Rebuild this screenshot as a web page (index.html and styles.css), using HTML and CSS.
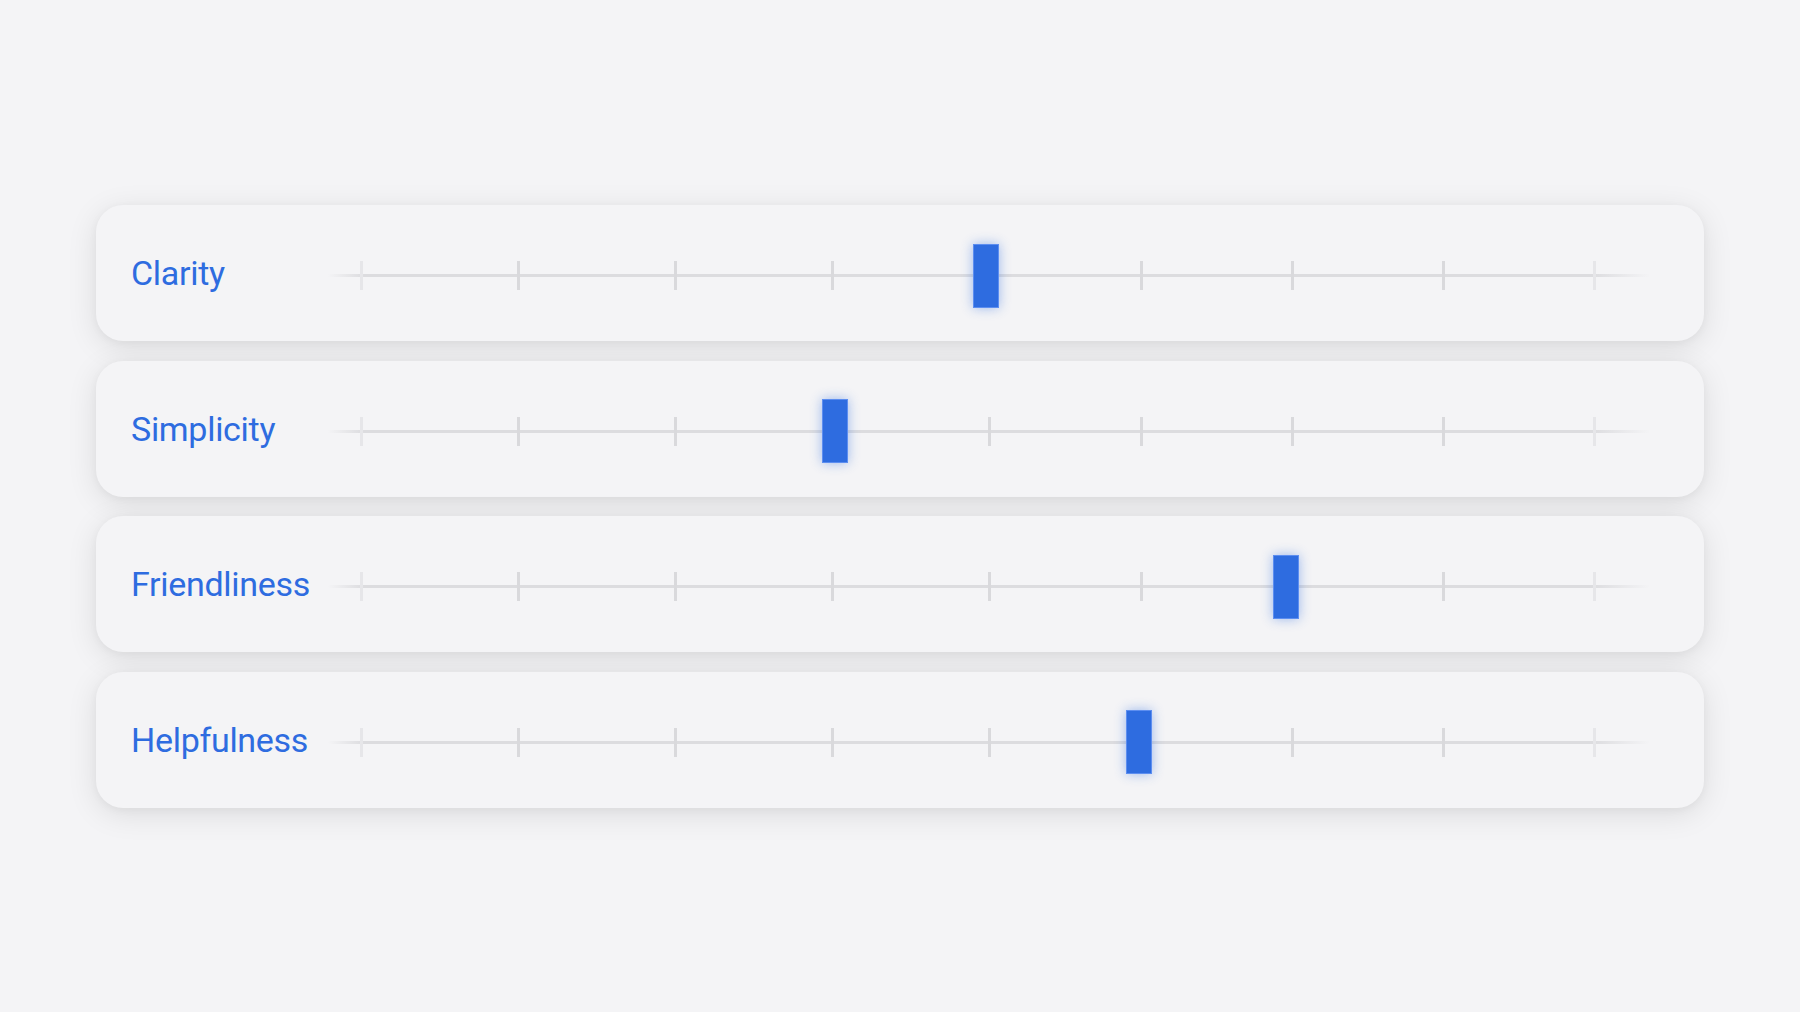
FILE: index.html
```html
<!DOCTYPE html>
<html>
<head>
<meta charset="utf-8">
<link rel="stylesheet" href="styles.css">
</head>
<body>
<main class="list">
  <section class="card">
    <div class="label">Clarity</div>
    <div class="track">
      <div class="line"></div>
      <div class="ticks"><i class="tick"></i><i class="tick"></i><i class="tick"></i><i class="tick"></i><i class="tick"></i><i class="tick"></i><i class="tick"></i><i class="tick"></i><i class="tick"></i></div>
      <div class="thumb" style="left:645px"></div>
    </div>
  </section>
  <section class="card">
    <div class="label">Simplicity</div>
    <div class="track">
      <div class="line"></div>
      <div class="ticks"><i class="tick"></i><i class="tick"></i><i class="tick"></i><i class="tick"></i><i class="tick"></i><i class="tick"></i><i class="tick"></i><i class="tick"></i><i class="tick"></i></div>
      <div class="thumb" style="left:494px"></div>
    </div>
  </section>
  <section class="card">
    <div class="label">Friendliness</div>
    <div class="track">
      <div class="line"></div>
      <div class="ticks"><i class="tick"></i><i class="tick"></i><i class="tick"></i><i class="tick"></i><i class="tick"></i><i class="tick"></i><i class="tick"></i><i class="tick"></i><i class="tick"></i></div>
      <div class="thumb" style="left:945px"></div>
    </div>
  </section>
  <section class="card">
    <div class="label">Helpfulness</div>
    <div class="track">
      <div class="line"></div>
      <div class="ticks"><i class="tick"></i><i class="tick"></i><i class="tick"></i><i class="tick"></i><i class="tick"></i><i class="tick"></i><i class="tick"></i><i class="tick"></i><i class="tick"></i></div>
      <div class="thumb" style="left:798px"></div>
    </div>
  </section>
</main>
</body>
</html>
```
FILE: styles.css
```css
html, body {
  margin: 0;
  padding: 0;
}
body {
  width: 1800px;
  height: 1012px;
  background: #f4f4f6;
  font-family: Roboto, "Noto Sans", sans-serif;
  overflow: hidden;
}
.list {
  display: flex;
  flex-direction: column;
  gap: 19.5px;
  padding: 205px 96px 0;
}
.card {
  height: 136px;
  box-sizing: border-box;
  display: flex;
  align-items: center;
  padding: 0 54px 0 35px;
  background: #f4f4f6;
  border-radius: 27px;
  box-shadow: 0 6px 30px rgba(0, 0, 0, 0.1), 0 2px 8px rgba(0, 0, 0, 0.04);
}
.label {
  width: 197px;
  flex: none;
  font-size: 34px;
  font-weight: 400;
  letter-spacing: -0.3px;
  color: #2e6ce0;
}
.track {
  position: relative;
  flex: 1;
  height: 64px;
  margin-top: 5px;
}
.line {
  position: absolute;
  left: 0;
  right: 0;
  top: 30.5px;
  height: 3px;
  background: linear-gradient(to right, rgba(218,218,221,0) 0, #dcdcdf 36px, #dcdcdf calc(100% - 58px), rgba(218,218,221,0) 100%);
}
.ticks {
  position: absolute;
  left: 0;
  right: 0;
  top: 17.5px;
  display: flex;
}
.tick {
  display: block;
  width: 3px;
  height: 29px;
  background: #d9d9dc;
  flex: none;
}
.tick:first-child {
  margin-left: 31.5px;
  background: #e6e6e9;
}
.tick:nth-child(n+2) {
  margin-left: 154px;
}
.tick:nth-child(6) {
  margin-left: 149px;
}
.tick:nth-child(n+7) {
  margin-left: 148px;
}
.tick:last-child {
  background: #e6e6e9;
}
.thumb {
  position: absolute;
  top: 0;
  width: 26px;
  height: 64px;
  box-sizing: border-box;
  background: #2e6ce0;
  border: 1px solid #5d8ef0;
  box-shadow: 0 0 12px rgba(46, 108, 224, 0.45);
}
```
